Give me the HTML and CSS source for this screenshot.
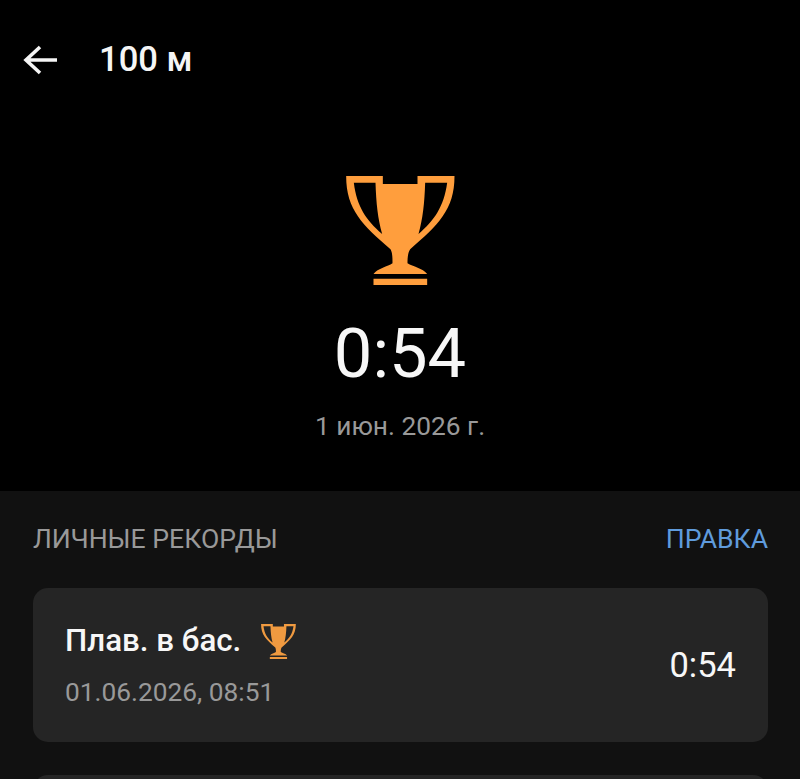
FILE: index.html
```html
<!DOCTYPE html>
<html lang="ru">

<head>
    <meta charset="UTF-8">
    <meta name="viewport" content="width=device-width, initial-scale=1.0">
    <title>100 м</title>
    <link rel="stylesheet" href="styles.css">
</head>

<body>
    <svg class="defs" width="0" height="0">
        <symbol id="trophy" viewBox="80 48 326 327">
            <path fill-rule="evenodd" d="M80 48H190V72H294V48H405C405 150 355 195 272 268C265 278 264 295 264 310C280 320 310 325 323 342H162C175 325 205 320 219 310C219 295 219 278 213 268C130 195 80 150 80 48ZM103 68H168C170 130 175 175 188 222C140 180 112 140 103 68ZM383 68H317C315 130 310 175 297 222C345 180 373 140 383 68ZM162 356H323V375H162Z" />
        </symbol>
    </svg>

    <header class="topbar">
        <svg class="back" viewBox="0 0 36 32" width="36" height="32">
            <path d="M34 16H3M17 3L3 16L17 29" />
        </svg>
        <h1>100 м</h1>
    </header>

    <section class="summary">
        <svg class="trophy-big"><use href="#trophy" /></svg>
        <p class="best-time">0:54</p>
        <p class="best-date">1 июн. 2026 г.</p>
    </section>

    <section class="records">
        <div class="records-head">
            <span class="records-title">ЛИЧНЫЕ РЕКОРДЫ</span>
            <span class="records-edit">ПРАВКА</span>
        </div>
        <div class="card">
            <div class="card-info">
                <div class="card-name">
                    <span>Плав. в бас.</span>
                    <svg class="trophy-small"><use href="#trophy" /></svg>
                </div>
                <div class="card-date">01.06.2026, 08:51</div>
            </div>
            <div class="card-time">0:54</div>
        </div>
        <div class="card card-next"></div>
    </section>
</body>

</html>
```

FILE: styles.css
```css
* {
    margin: 0;
    padding: 0;
    box-sizing: border-box;
}

html, body {
    height: 779px;
    overflow: hidden;
}

body {
    background-color: #000;
    color: #fff;
    font-family: Roboto, "Noto Sans", sans-serif;
}

.defs {
    display: block;
}

.topbar {
    display: flex;
    align-items: center;
    gap: 40px;
    height: 119px;
    padding-left: 23px;
}

.back {
    fill: none;
    stroke: #f5f5f5;
    stroke-width: 3.6;
}

h1 {
    font-size: 34.6px;
    font-weight: 500;
    color: #f5f5f5;
    margin-top: -2px;
}

.summary {
    display: flex;
    flex-direction: column;
    align-items: center;
    height: 372px;
    padding-top: 57px;
}

.trophy-big {
    width: 109px;
    height: 109px;
    fill: #ff9e3d;
}

.best-time {
    font-size: 68.6px;
    line-height: 80px;
    margin-top: 29px;
    color: #f7f7f7;
}

.best-date {
    font-size: 26.3px;
    line-height: 32px;
    margin-top: 16px;
    color: #999;
}

.records {
    height: 288px;
    padding: 0 32px 0 33px;
    background-color: #111;
}

.records-head {
    display: flex;
    justify-content: space-between;
    align-items: center;
    height: 97px;
    padding-bottom: 2px;
    font-size: 26.6px;
}

.records-title {
    color: #999;
}

.records-edit {
    color: #5f9bdc;
}

.card {
    display: flex;
    justify-content: space-between;
    align-items: center;
    height: 154px;
    padding: 0 32px;
    background-color: #252525;
    border-radius: 15px;
}

.card-next {
    margin-top: 33px;
}

.card-name {
    display: flex;
    align-items: center;
    gap: 20px;
    height: 36px;
    font-size: 31.3px;
    font-weight: 500;
    color: #f7f7f7;
}

.trophy-small {
    width: 35px;
    height: 35px;
    margin-top: 2px;
    fill: #f09a40;
}

.card-date {
    font-size: 26.3px;
    line-height: 32px;
    margin-top: 18px;
    color: #999;
}

.card-time {
    font-size: 34.5px;
    color: #f7f7f7;
}
```
